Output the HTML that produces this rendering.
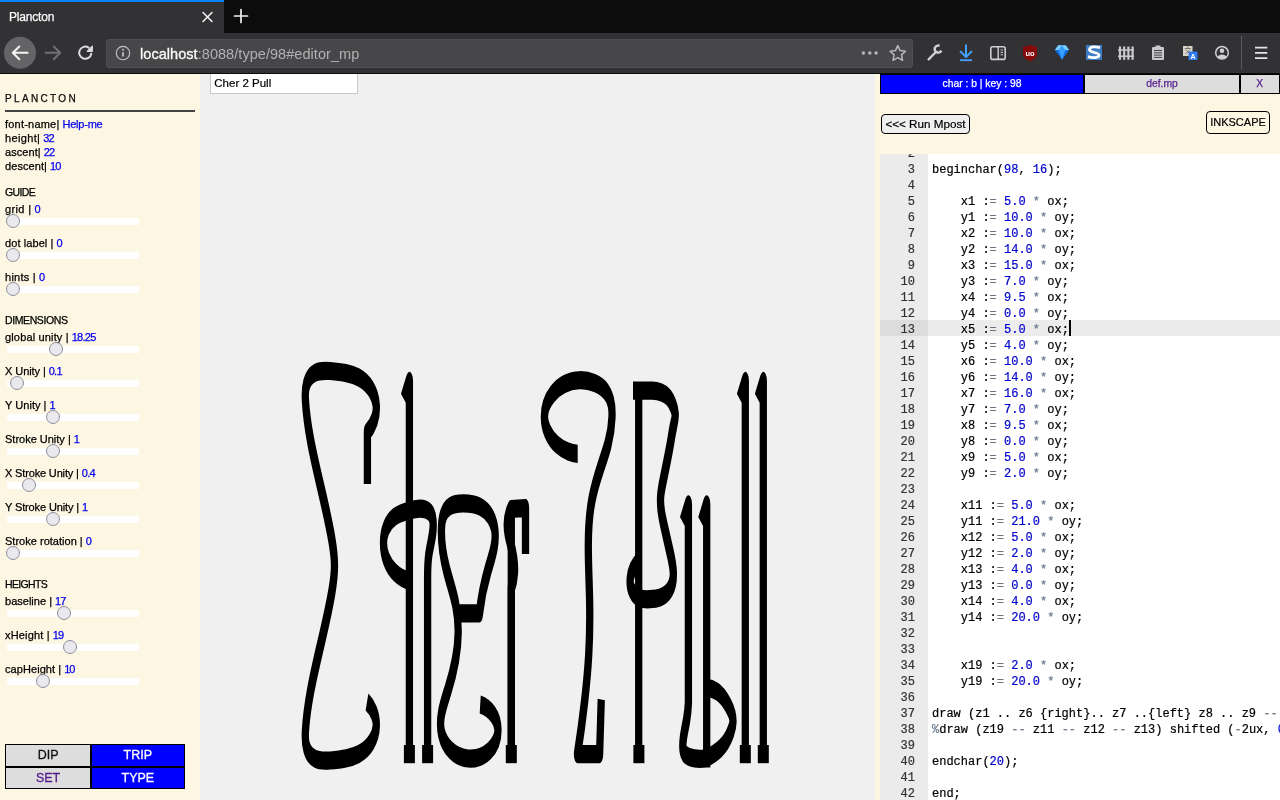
<!DOCTYPE html>
<html lang="en"><head><meta charset="utf-8"><title>Plancton</title>
<style>
html,body{margin:0;padding:0;}
body{width:1280px;height:800px;overflow:hidden;position:relative;background:#f0f0f0;font-family:"Liberation Sans",sans-serif;}
.abs{position:absolute;}
#chrome{left:0;top:0;width:1280px;height:74px;background:#323234;}
#tabbar{left:0;top:0;width:1280px;height:33px;background:#0c0c0d;}
#tab{left:0;top:0;width:224px;height:33px;background:#323234;}
#tabline{left:0;top:0;width:224px;height:2px;background:#0a84ff;}
#tabtitle{left:9px;top:9px;font-size:12px;color:#f9f9fa;line-height:16px;letter-spacing:-0.2px;-webkit-text-stroke:0.25px #f9f9fa;}
#urlbar{left:106px;top:38.5px;width:806.5px;height:29px;background:#474749;border-radius:3px;box-sizing:border-box;border:1px solid #505052;}
#url{left:140px;top:45px;font-size:14.5px;line-height:18px;color:#b1b1b3;white-space:pre;letter-spacing:0.05px;}
#url b{font-weight:normal;color:#f9f9fa;-webkit-text-stroke:0.3px #f9f9fa;}
#chromeline{left:0;top:72.5px;width:1280px;height:1.5px;background:#0c0c0d;}
#side{left:0;top:74px;width:200px;height:726px;background:#fdf6e3;}
#right{left:875px;top:74px;width:405px;height:726px;background:#fdf6e3;}
.t{position:absolute;left:5px;font-size:11px;line-height:14px;color:#000;white-space:pre;-webkit-text-stroke:0.25px #000;}
.t i{font-style:normal;color:#0000ee;-webkit-text-stroke:0.25px #0000ee;}
.track{position:absolute;left:7px;width:132px;height:7px;background:#fff;border-radius:1px;}
.thumb{position:absolute;width:12px;height:12px;border-radius:50%;background:#e9e9ed;border:1px solid #8f8f9d;box-sizing:content-box;}
.btn{position:absolute;box-sizing:border-box;border:1px solid #000;text-align:center;font-size:13px;line-height:21px;}
.rt{position:absolute;box-sizing:border-box;border:1px solid #000;text-align:center;font-size:10.3px;line-height:18px;height:19.8px;top:74.2px;-webkit-text-stroke:0.25px;}
.pb{position:absolute;box-sizing:border-box;border:1px solid #000;border-radius:4px;background:#f0f0f0;text-align:center;color:#000;}
#ed{left:880px;top:154px;width:400px;height:646px;background:#fff;overflow:hidden;font-family:"Liberation Mono",monospace;font-size:12px;-webkit-text-stroke:0.2px;}
#gut{left:0;top:0;width:48px;height:646px;background:#ebebeb;}
.ln{position:absolute;left:0;width:35px;text-align:right;height:16px;line-height:18px;color:#333;}
.cl{position:absolute;left:52px;height:16px;line-height:18px;color:#000;white-space:pre;}
.n{color:#0000cd;}
.o{color:#687687;}
#wrap{position:absolute;left:0;top:0;width:1280px;height:800px;overflow:hidden;will-change:transform;}
</style></head><body><div id="wrap">

<div id="chrome" class="abs"></div><div id="tabbar" class="abs"></div><div id="tab" class="abs"></div><div id="tabline" class="abs"></div>
<div id="tabtitle" class="abs">Plancton</div>
<div id="urlbar" class="abs"></div>
<div id="url" class="abs"><b>localhost</b>:8088/type/98#editor_mp</div>
<div id="chromeline" class="abs"></div>
<svg class="abs" style="left:0;top:0" width="1280" height="74" viewBox="0 0 1280 74" fill="none" stroke-linecap="round" stroke-linejoin="round"><!-- tab close -->
<path d="M203 12.5 L212 21.5 M212 12.5 L203 21.5" stroke="#f0f0f1" stroke-width="1.6"/>
<!-- new tab plus -->
<path d="M241 9.5 V22.5 M234.5 16 H247.5" stroke="#f0f0f1" stroke-width="1.7"/>
<!-- back -->
<circle cx="20" cy="52.8" r="16" fill="#646466" stroke="none"/>
<path d="M27.6 52.8 H12.8 M19.3 46.5 L12.8 52.8 L19.3 59.2" stroke="#f4f4f5" stroke-width="2"/>
<!-- forward -->
<path d="M45.6 52.8 H60.2 M53.8 46.5 L60.2 52.8 L53.8 59.2" stroke="#6f6f72" stroke-width="2"/>
<!-- reload -->
<path d="M91.3 53.8 A6.1 6.1 0 1 1 88.6 47.6" stroke="#dcdcdf" stroke-width="2"/>
<path d="M92.3 46.2 V51.3 H87.2 Z" fill="#dcdcdf" stroke="#dcdcdf" stroke-width="1.2"/>
<!-- info -->
<circle cx="123" cy="53.1" r="6.7" stroke="#c4c4c7" stroke-width="1.1"/>
<path d="M123 52.3 V56.6" stroke="#c4c4c7" stroke-width="1.7" stroke-linecap="butt"/>
<circle cx="123" cy="49.7" r="1" fill="#c4c4c7" stroke="none"/>
<!-- page actions dots -->
<g fill="#b8b8bb" stroke="none"><circle cx="863.4" cy="53" r="1.7"/><circle cx="869.8" cy="53" r="1.7"/><circle cx="876.1" cy="53" r="1.7"/></g>
<!-- star -->
<path d="M897.8 45.6 L900.1 50.6 L905.5 51.2 L901.5 54.9 L902.6 60.3 L897.8 57.6 L893 60.3 L894.1 54.9 L890.1 51.2 L895.5 50.6 Z" stroke="#b8b8bb" stroke-width="1.5"/>
<!-- wrench -->
<path d="M928.6 59.4 L935.6 52.3" stroke="#d0d0d3" stroke-width="2.3"/>
<path d="M939.6 45.9 A3.5 3.5 0 1 0 941.3 50.6" stroke="#d0d0d3" stroke-width="2.5" stroke-linecap="butt"/>
<!-- download -->
<path d="M966 45.3 V56.6 M960.6 51.6 L966 57 L971.4 51.6" stroke="#45a1ff" stroke-width="2"/>
<path d="M960 60.2 H972" stroke="#45a1ff" stroke-width="1.8" stroke-linecap="butt"/>
<!-- sidebar -->
<rect x="990.8" y="46.8" width="14.4" height="12.6" rx="2" stroke="#d0d0d3" stroke-width="1.6"/>
<path d="M998.2 47 V59.4" stroke="#d0d0d3" stroke-width="1.4" stroke-linecap="butt"/>
<path d="M1000.6 50 H1003 M1000.6 52.4 H1003 M1000.6 54.8 H1003" stroke="#d0d0d3" stroke-width="1" stroke-linecap="butt"/>
<!-- ublock -->
<path d="M1030 44.8 C1027.5 46.2 1025 46.6 1023 46.6 V53.5 C1023 57.5 1026.5 60 1030 61.2 C1033.500 60 1037 57.5 1037 53.500 V46.6 C1035 46.6 1032.500 46.2 1030 44.800 Z" fill="#860a0a" stroke="none"/>
<text x="1030" y="55.6" font-family="Liberation Sans, sans-serif" font-size="7.5" font-weight="bold" fill="#fff" stroke="none" text-anchor="middle">uo</text>
<!-- gem -->
<path d="M1054.8 50 L1058.3 45.2 H1065.7 L1069.2 50 L1062 59.8 Z" fill="#0f6fe0" stroke="none"/>
<path d="M1054.8 50 L1058.3 45.2 H1065.7 L1069.2 50 Z" fill="#7ccfff" stroke="none"/>
<path d="M1058.6 50 L1062 45.2 L1065.4 50 L1062 59.8 Z" fill="#3aa0ff" stroke="none"/>
<!-- S icon -->
<rect x="1086" y="45" width="16" height="15" fill="#3b7cc3" stroke="none"/>
<path d="M1100 47.6 C1095 46.2 1089.5 46.600 1089.5 49.8 C1089.5 53 1099 52 1099 55.2 C1099 58 1092.500 58.3 1088 56.600" stroke="#fff" stroke-width="2.8" stroke-linecap="butt"/>
<!-- fence -->
<g stroke="#c9c9cc" stroke-linecap="butt"><path d="M1120 46.5 V59.8 M1124.2 46.5 V59.8 M1128.4 46.5 V59.8 M1132.6 46.5 V59.8" stroke-width="2.2"/><path d="M1118 50 H1134 M1118 56.3 H1134" stroke-width="1.6"/></g>
<!-- clipboard -->
<rect x="1152" y="47" width="12" height="13" rx="1" fill="#c9c9cc" stroke="none"/>
<rect x="1155.500" y="45.5" width="5" height="2.5" fill="#c9c9cc" stroke="none"/>
<path d="M1154 50.5 H1162 M1154 52.800 H1162 M1154 55.1 H1162 M1154 57.4 H1162" stroke="#323234" stroke-width="0.9" stroke-linecap="butt"/>
<!-- translate -->
<rect x="1183" y="46" width="9.500" height="10" fill="#d8d4c8" stroke="none"/>
<rect x="1188.5" y="51.500" width="9" height="8.5" rx="1" fill="#2f7bf0" stroke="none"/>
<text x="1193" y="58.6" font-family="Liberation Sans, sans-serif" font-size="7" font-weight="bold" fill="#fff" stroke="none" text-anchor="middle">A</text>
<path d="M1185 48.500 H1190.5 M1187.700 47 V48.5 M1186 50 L1189.5 53.500 M1189.500 50 L1186 53.5" stroke="#555" stroke-width="0.7"/>
<!-- account -->
<circle cx="1222" cy="52.8" r="6.3" stroke="#d0d0d3" stroke-width="1.5"/>
<circle cx="1222" cy="50.8" r="2.3" fill="#d0d0d3" stroke="none"/>
<path d="M1217.500 57 C1218.500 53.600 1225.500 53.6 1226.5 57 C1224.500 59.300 1219.500 59.3 1217.500 57 Z" fill="#d0d0d3" stroke="none"/>
<!-- separator -->
<path d="M1241.500 36 V69.5" stroke="#5a5a5c" stroke-width="1" stroke-linecap="butt"/>
<!-- hamburger -->
<path d="M1255 47.700 H1267.300 M1255 52.9 H1267.300 M1255 58.1 H1267.3" stroke="#e4e4e6" stroke-width="1.7" stroke-linecap="butt"/>
</svg>
<div id="side" class="abs"></div>
<div class="t" style="top:92px;font-size:10px;letter-spacing:2.35px;color:#111">PLANCTON</div>
<div class="abs" style="left:5px;top:110px;width:190px;height:1.5px;background:#444"></div>
<div class="t" style="top:117px;letter-spacing:0.211px">font-name|</div>
<div class="t" style="top:117px;left:62.50px;letter-spacing:-0.225px"><i>Help-me</i></div>
<div class="t" style="top:131px;letter-spacing:0.346px">height|</div>
<div class="t" style="top:131px;left:43.25px;letter-spacing:-0.750px"><i>32</i></div>
<div class="t" style="top:145px;letter-spacing:0.067px">ascent|</div>
<div class="t" style="top:145px;left:43.75px;letter-spacing:-0.750px"><i>22</i></div>
<div class="t" style="top:159px;letter-spacing:0.076px">descent|</div>
<div class="t" style="top:159px;left:50.00px;letter-spacing:-0.750px"><i>10</i></div>
<div class="t" style="top:185px;font-size:10.5px;letter-spacing:-0.603px">GUIDE</div>
<div class="t" style="top:202px;letter-spacing:0.372px">grid |</div>
<div class="t" style="top:202px;left:34.50px;letter-spacing:-0.875px"><i>0</i></div>
<div class="track" style="top:218px"></div>
<div class="thumb" style="left:6.2px;top:214.4px"></div>
<div class="t" style="top:236px;letter-spacing:0.089px">dot label |</div>
<div class="t" style="top:236px;left:56.50px;letter-spacing:-0.875px"><i>0</i></div>
<div class="track" style="top:252px"></div>
<div class="thumb" style="left:6.2px;top:248.4px"></div>
<div class="t" style="top:270px;letter-spacing:0.263px">hints |</div>
<div class="t" style="top:270px;left:39.00px;letter-spacing:-0.875px"><i>0</i></div>
<div class="track" style="top:286px"></div>
<div class="thumb" style="left:6.2px;top:282.4px"></div>
<div class="t" style="top:313px;font-size:10.5px;letter-spacing:-0.402px">DIMENSIONS</div>
<div class="t" style="top:330px;letter-spacing:0.155px">global unity |</div>
<div class="t" style="top:330px;left:71.75px;letter-spacing:-0.756px"><i>18.25</i></div>
<div class="track" style="top:346px"></div>
<div class="thumb" style="left:49.2px;top:342.4px"></div>
<div class="t" style="top:364px;letter-spacing:-0.069px">X Unity |</div>
<div class="t" style="top:364px;left:48.75px;letter-spacing:-0.766px"><i>0.1</i></div>
<div class="track" style="top:380px"></div>
<div class="thumb" style="left:10.2px;top:376.4px"></div>
<div class="t" style="top:398px;letter-spacing:0.036px">Y Unity |</div>
<div class="t" style="top:398px;left:49.50px;letter-spacing:-2.125px"><i>1</i></div>
<div class="track" style="top:414px"></div>
<div class="thumb" style="left:46.2px;top:410.4px"></div>
<div class="t" style="top:432px;letter-spacing:-0.006px">Stroke Unity |</div>
<div class="t" style="top:432px;left:73.75px;letter-spacing:-2.125px"><i>1</i></div>
<div class="track" style="top:448px"></div>
<div class="thumb" style="left:46.2px;top:444.4px"></div>
<div class="t" style="top:466px;letter-spacing:-0.154px">X Stroke Unity |</div>
<div class="t" style="top:466px;left:81.75px;letter-spacing:-0.682px"><i>0.4</i></div>
<div class="track" style="top:482px"></div>
<div class="thumb" style="left:22.2px;top:478.4px"></div>
<div class="t" style="top:500px;letter-spacing:-0.127px">Y Stroke Unity |</div>
<div class="t" style="top:500px;left:82.00px;letter-spacing:-1.875px"><i>1</i></div>
<div class="track" style="top:516px"></div>
<div class="thumb" style="left:46.2px;top:512.4px"></div>
<div class="t" style="top:534px;letter-spacing:0.017px">Stroke rotation |</div>
<div class="t" style="top:534px;left:85.75px;letter-spacing:-0.375px"><i>0</i></div>
<div class="track" style="top:550px"></div>
<div class="thumb" style="left:6.2px;top:546.4px"></div>
<div class="t" style="top:577px;font-size:10.5px;letter-spacing:-0.667px">HEIGHTS</div>
<div class="t" style="top:594px;letter-spacing:0.011px">baseline |</div>
<div class="t" style="top:594px;left:55.00px;letter-spacing:-0.875px"><i>17</i></div>
<div class="track" style="top:610px"></div>
<div class="thumb" style="left:57.2px;top:606.4px"></div>
<div class="t" style="top:628px;letter-spacing:0.170px">xHeight |</div>
<div class="t" style="top:628px;left:52.75px;letter-spacing:-0.875px"><i>19</i></div>
<div class="track" style="top:644px"></div>
<div class="thumb" style="left:63.2px;top:640.4px"></div>
<div class="t" style="top:662px;letter-spacing:0.072px">capHeight |</div>
<div class="t" style="top:662px;left:64.25px;letter-spacing:-1.000px"><i>10</i></div>
<div class="track" style="top:678px"></div>
<div class="thumb" style="left:36.2px;top:674.4px"></div>
<div class="abs" style="left:5px;top:744.2px;width:180px;height:45.3px;background:#000"></div>
<div class="abs" style="left:6px;top:745.2px;width:84.2px;height:20.9px;background:#dddddd;color:#111;text-align:center;font-size:12.5px;line-height:20.9px;-webkit-text-stroke:0.3px #111">DIP</div>
<div class="abs" style="left:91.7px;top:745.2px;width:92.3px;height:20.9px;background:#0000ff;color:#fff;text-align:center;font-size:12.5px;line-height:20.9px;-webkit-text-stroke:0.3px #fff">TRIP</div>
<div class="abs" style="left:6px;top:767.7px;width:84.2px;height:20.8px;background:#dddddd;color:#551a8b;text-align:center;font-size:12.5px;line-height:20.8px;-webkit-text-stroke:0.3px #551a8b">SET</div>
<div class="abs" style="left:91.7px;top:767.7px;width:92.3px;height:20.8px;background:#0000ff;color:#fff;text-align:center;font-size:12.5px;line-height:20.8px;-webkit-text-stroke:0.3px #fff">TYPE</div>
<div class="abs" style="left:210px;top:74px;width:148px;height:20px;background:#fff;border:1px solid #c8c8c8;border-top:none;box-sizing:border-box;font-size:11.5px;line-height:18px;padding-left:3.3px;color:#000;-webkit-text-stroke:0.2px">Cher 2 Pull</div>
<svg class="abs" role="img" aria-label="Cher 2 Pull" style="left:200px;top:74px" width="675" height="726" viewBox="200 74 675 726">
<g transform="scale(0.4 1)" fill="none" stroke="#000" stroke-width="18.25" stroke-linecap="butt" stroke-linejoin="round">
<path d="M918.50 484.00L918.50 432.00C934.15 424.83 942.13 415.50 940.75 406.00C939.02 394.11 922.90 383.24 896.88 377.50C886.97 375.32 876.06 374.02 865.00 373.10C851.82 372.00 838.41 371.44 825.00 371.00C812.17 370.58 798.82 370.33 787.50 372.80C764.86 377.74 761.98 389.36 763.50 400.00C765.41 413.43 770.16 426.77 776.25 440.00C791.68 473.54 815.67 506.37 829.75 540.00C833.32 548.52 836.25 557.11 836.25 565.75C836.25 574.39 833.32 582.98 829.75 591.50C815.67 625.13 791.68 657.96 776.25 691.50C770.16 704.73 765.42 718.07 763.50 731.50C761.98 742.14 764.86 753.76 787.50 758.70C798.82 761.17 812.17 760.92 825.00 760.50C838.42 760.06 851.82 759.50 865.00 758.40C876.06 757.47 886.95 756.16 896.88 754.00C923.13 748.28 939.99 737.45 940.75 725.50C941.31 716.73 932.91 708.24 917.50 702.00"/>
<path d="M1009.75 399.25L1023.50 381.00L1023.50 754.10"/>
<path d="M1023.75 581.00C1010.08 579.42 997.62 576.50 987.50 572.50C967.99 564.79 958.81 553.98 958.75 543.00C958.69 532.77 966.96 522.48 987.50 516.50C998.11 513.41 1010.90 511.94 1023.50 510.50C1032.18 509.51 1040.96 508.50 1050.00 508.50C1059.43 508.50 1068.91 509.64 1075.00 512.50C1079.99 514.84 1081.74 517.94 1082.50 521.00C1085.36 532.45 1075.87 543.64 1071.88 555.00C1068.97 563.27 1068.99 571.65 1069.00 580.00C1069.02 593.33 1069.02 606.67 1069.00 620.00L1069.00 754.00"/>
<path d="M1140.00 613.30L1198.50 613.30C1202.60 598.65 1209.79 584.16 1220.00 570.00C1229.95 556.19 1242.78 542.18 1236.25 528.00C1232.13 519.05 1220.10 510.78 1200.00 506.60C1187.37 503.97 1172.97 503.35 1158.75 503.30C1146.96 503.26 1134.82 503.64 1125.00 506.25C1108.59 510.62 1104.59 519.03 1103.75 527.00C1102.22 541.50 1107.57 555.94 1116.50 570.00C1123.72 581.37 1133.27 592.50 1139.00 604.00C1143.59 613.22 1145.69 622.60 1145.50 632.00C1145.09 651.74 1134.63 671.16 1120.00 690.00C1109.06 704.10 1095.77 718.54 1103.75 733.00C1111.13 746.38 1136.44 757.36 1170.00 758.50C1210.81 759.89 1245.23 746.57 1245.00 730.00C1244.84 718.60 1227.26 708.37 1200.50 704.50"/>
<path d="M1278.25 754.00L1278.25 588.00C1282.87 582.85 1285.57 577.46 1286.25 572.00C1287.39 562.87 1282.93 553.84 1277.25 545.00C1273.02 538.41 1268.08 531.82 1268.00 525.00C1267.93 519.45 1271.10 513.97 1277.25 509.00L1313.75 508.00L1313.75 554.00"/>
<path d="M1278.25 754.00L1278.25 506.00"/>
<path d="M1444.25 453.75C1435.95 453.75 1427.89 452.79 1420.25 451.50C1410.04 449.78 1400.50 447.46 1392.25 444.50C1382.08 440.85 1374.17 436.32 1368.75 431.30C1363.87 426.78 1361.09 421.93 1361.00 417.00C1360.85 408.64 1368.34 400.58 1381.25 394.00C1389.38 389.86 1399.51 386.39 1411.25 384.00C1422.88 381.63 1435.71 380.40 1448.75 380.25C1461.60 380.11 1474.39 381.02 1486.25 383.00C1497.44 384.86 1507.61 387.65 1515.00 391.50C1528.72 398.64 1530.83 407.99 1530.00 417.00C1529.16 426.12 1525.66 435.16 1520.00 444.00C1514.79 452.12 1507.78 460.03 1501.25 468.00C1492.64 478.51 1484.86 489.13 1479.75 500.00C1472.79 514.82 1470.88 529.92 1470.75 545.00C1470.59 563.34 1473.06 581.66 1474.00 600.00C1474.94 618.34 1474.37 636.69 1471.75 655.00C1469.60 670.04 1466.07 685.03 1461.88 700.00C1456.81 718.05 1450.77 736.05 1443.75 754.00L1499.00 754.00L1503.12 699.50"/>
<path d="M1596.75 390.65L1596.75 754.00"/>
<path d="M1582.50 390.65L1630.00 390.65C1638.15 390.61 1646.23 391.24 1653.75 392.50C1660.26 393.59 1666.26 395.15 1671.00 397.25C1676.76 399.80 1680.31 402.98 1683.25 406.20C1685.56 408.73 1687.53 411.32 1688.00 414.00C1688.71 418.06 1685.94 422.03 1683.75 426.00C1681.20 430.63 1679.43 435.32 1677.50 440.00C1671.96 453.40 1665.01 466.70 1658.12 480.00C1655.21 485.62 1652.31 491.26 1651.50 497.00C1649.93 508.15 1656.27 519.13 1662.50 530.00C1666.80 537.50 1671.05 545.00 1675.25 552.50C1678.85 558.94 1682.42 565.41 1683.25 572.00C1683.99 577.89 1682.45 583.91 1675.00 589.00C1669.31 592.89 1660.55 595.92 1650.00 597.50C1642.03 598.69 1633.48 598.99 1625.00 599.20C1616.55 599.41 1607.90 599.54 1600.00 598.30C1581.60 595.42 1573.66 587.12 1575.50 579.00C1577.06 572.12 1584.89 565.72 1597.50 561.00"/>
<path d="M1707.25 522.55L1721.00 504.30L1721.00 703.00C1720.35 708.70 1718.85 714.37 1716.50 720.00C1713.99 726.01 1710.51 731.96 1708.50 738.00C1707.73 740.32 1707.18 742.66 1707.00 745.00C1706.78 747.97 1707.26 751.05 1711.50 753.50C1716.97 756.65 1726.73 757.80 1736.25 758.40C1744.99 758.95 1753.94 759.16 1762.50 758.25C1770.73 757.38 1778.01 755.54 1785.00 753.60C1790.23 752.15 1795.36 750.64 1800.00 748.90C1812.98 744.04 1821.62 737.70 1827.50 731.00C1830.19 727.93 1832.33 724.76 1832.50 721.50C1832.81 715.65 1826.94 710.14 1820.00 705.00C1813.01 699.82 1804.70 694.81 1792.50 691.50C1784.83 689.42 1775.98 688.13 1766.75 687.75"/>
<path d="M1753.00 522.55L1766.75 504.30L1766.75 767.50"/>
<path d="M1849.50 399.25L1863.25 381.00L1863.25 754.10"/>
<path d="M1894.50 399.25L1908.25 381.00L1908.25 754.10"/>
</g>
<g fill="#000">
<rect x="403.90" y="745.00" width="11.00" height="18.20"/>
<rect x="422.10" y="745.00" width="11.00" height="18.20"/>
<rect x="505.80" y="745.00" width="11.00" height="18.20"/>
<rect x="633.40" y="745.00" width="11.00" height="18.20"/>
<rect x="739.80" y="745.00" width="11.00" height="18.20"/>
<rect x="757.80" y="745.00" width="11.00" height="18.20"/>
</g></svg>
<div id="right" class="abs"></div>
<div class="rt" style="left:880px;width:204px;background:#0000ff;color:#fff">char : b | key : 98</div>
<div class="rt" style="left:1084px;width:156px;background:#ddd;color:#551a8b">def.mp</div>
<div class="rt" style="left:1240px;width:39.5px;background:#ddd;color:#551a8b">X</div>
<div class="pb" style="left:881px;top:114px;width:89px;height:20px;font-size:11.7px;line-height:18px;-webkit-text-stroke:0.2px">&lt;&lt;&lt; Run Mpost</div>
<div class="pb" style="left:1206px;top:111px;width:64px;height:23px;font-size:11px;line-height:21.5px;background:transparent;-webkit-text-stroke:0.2px">INKSCAPE</div>
<div id="ed" class="abs"><div id="gut" class="abs"></div>
<div class="abs" style="left:0;top:166px;width:48px;height:16px;background:#dcdcdc"></div>
<div class="abs" style="left:48px;top:166px;width:352px;height:16px;background:#ececec"></div>
<div class="ln" style="top:-9px">2</div>
<div class="ln" style="top:7px">3</div>
<div class="cl" style="top:7px">beginchar(<span class="n">98</span>, <span class="n">16</span>);</div>
<div class="ln" style="top:23px">4</div>
<div class="ln" style="top:39px">5</div>
<div class="cl" style="top:39px">    x1 :<span class="o">=</span> <span class="n">5.0</span> <span class="o">*</span> ox;</div>
<div class="ln" style="top:55px">6</div>
<div class="cl" style="top:55px">    y1 :<span class="o">=</span> <span class="n">10.0</span> <span class="o">*</span> oy;</div>
<div class="ln" style="top:71px">7</div>
<div class="cl" style="top:71px">    x2 :<span class="o">=</span> <span class="n">10.0</span> <span class="o">*</span> ox;</div>
<div class="ln" style="top:87px">8</div>
<div class="cl" style="top:87px">    y2 :<span class="o">=</span> <span class="n">14.0</span> <span class="o">*</span> oy;</div>
<div class="ln" style="top:103px">9</div>
<div class="cl" style="top:103px">    x3 :<span class="o">=</span> <span class="n">15.0</span> <span class="o">*</span> ox;</div>
<div class="ln" style="top:119px">10</div>
<div class="cl" style="top:119px">    y3 :<span class="o">=</span> <span class="n">7.0</span> <span class="o">*</span> oy;</div>
<div class="ln" style="top:135px">11</div>
<div class="cl" style="top:135px">    x4 :<span class="o">=</span> <span class="n">9.5</span> <span class="o">*</span> ox;</div>
<div class="ln" style="top:151px">12</div>
<div class="cl" style="top:151px">    y4 :<span class="o">=</span> <span class="n">0.0</span> <span class="o">*</span> oy;</div>
<div class="ln" style="top:167px">13</div>
<div class="cl" style="top:167px">    x5 :<span class="o">=</span> <span class="n">5.0</span> <span class="o">*</span> ox;</div>
<div class="ln" style="top:183px">14</div>
<div class="cl" style="top:183px">    y5 :<span class="o">=</span> <span class="n">4.0</span> <span class="o">*</span> oy;</div>
<div class="ln" style="top:199px">15</div>
<div class="cl" style="top:199px">    x6 :<span class="o">=</span> <span class="n">10.0</span> <span class="o">*</span> ox;</div>
<div class="ln" style="top:215px">16</div>
<div class="cl" style="top:215px">    y6 :<span class="o">=</span> <span class="n">14.0</span> <span class="o">*</span> oy;</div>
<div class="ln" style="top:231px">17</div>
<div class="cl" style="top:231px">    x7 :<span class="o">=</span> <span class="n">16.0</span> <span class="o">*</span> ox;</div>
<div class="ln" style="top:247px">18</div>
<div class="cl" style="top:247px">    y7 :<span class="o">=</span> <span class="n">7.0</span> <span class="o">*</span> oy;</div>
<div class="ln" style="top:263px">19</div>
<div class="cl" style="top:263px">    x8 :<span class="o">=</span> <span class="n">9.5</span> <span class="o">*</span> ox;</div>
<div class="ln" style="top:279px">20</div>
<div class="cl" style="top:279px">    y8 :<span class="o">=</span> <span class="n">0.0</span> <span class="o">*</span> oy;</div>
<div class="ln" style="top:295px">21</div>
<div class="cl" style="top:295px">    x9 :<span class="o">=</span> <span class="n">5.0</span> <span class="o">*</span> ox;</div>
<div class="ln" style="top:311px">22</div>
<div class="cl" style="top:311px">    y9 :<span class="o">=</span> <span class="n">2.0</span> <span class="o">*</span> oy;</div>
<div class="ln" style="top:327px">23</div>
<div class="ln" style="top:343px">24</div>
<div class="cl" style="top:343px">    x11 :<span class="o">=</span> <span class="n">5.0</span> <span class="o">*</span> ox;</div>
<div class="ln" style="top:359px">25</div>
<div class="cl" style="top:359px">    y11 :<span class="o">=</span> <span class="n">21.0</span> <span class="o">*</span> oy;</div>
<div class="ln" style="top:375px">26</div>
<div class="cl" style="top:375px">    x12 :<span class="o">=</span> <span class="n">5.0</span> <span class="o">*</span> ox;</div>
<div class="ln" style="top:391px">27</div>
<div class="cl" style="top:391px">    y12 :<span class="o">=</span> <span class="n">2.0</span> <span class="o">*</span> oy;</div>
<div class="ln" style="top:407px">28</div>
<div class="cl" style="top:407px">    x13 :<span class="o">=</span> <span class="n">4.0</span> <span class="o">*</span> ox;</div>
<div class="ln" style="top:423px">29</div>
<div class="cl" style="top:423px">    y13 :<span class="o">=</span> <span class="n">0.0</span> <span class="o">*</span> oy;</div>
<div class="ln" style="top:439px">30</div>
<div class="cl" style="top:439px">    x14 :<span class="o">=</span> <span class="n">4.0</span> <span class="o">*</span> ox;</div>
<div class="ln" style="top:455px">31</div>
<div class="cl" style="top:455px">    y14 :<span class="o">=</span> <span class="n">20.0</span> <span class="o">*</span> oy;</div>
<div class="ln" style="top:471px">32</div>
<div class="ln" style="top:487px">33</div>
<div class="ln" style="top:503px">34</div>
<div class="cl" style="top:503px">    x19 :<span class="o">=</span> <span class="n">2.0</span> <span class="o">*</span> ox;</div>
<div class="ln" style="top:519px">35</div>
<div class="cl" style="top:519px">    y19 :<span class="o">=</span> <span class="n">20.0</span> <span class="o">*</span> oy;</div>
<div class="ln" style="top:535px">36</div>
<div class="ln" style="top:551px">37</div>
<div class="cl" style="top:551px">draw (z1 .. z6 {right}.. z7 ..{left} z8 .. z9 <span class="o">--</span> z5 .. z4 .. z3 .. z2);</div>
<div class="ln" style="top:567px">38</div>
<div class="cl" style="top:567px"><span class="o">%</span>draw (z19 <span class="o">--</span> z11 <span class="o">--</span> z12 <span class="o">--</span> z13) shifted (<span class="o">-</span>2ux, <span class="n">0</span>);</div>
<div class="ln" style="top:583px">39</div>
<div class="ln" style="top:599px">40</div>
<div class="cl" style="top:599px">endchar(<span class="n">20</span>);</div>
<div class="ln" style="top:615px">41</div>
<div class="ln" style="top:631px">42</div>
<div class="cl" style="top:631px">end;</div>
<div class="abs" style="left:188.8px;top:166px;width:2px;height:16px;background:#000"></div>
</div>
</div></body></html>
